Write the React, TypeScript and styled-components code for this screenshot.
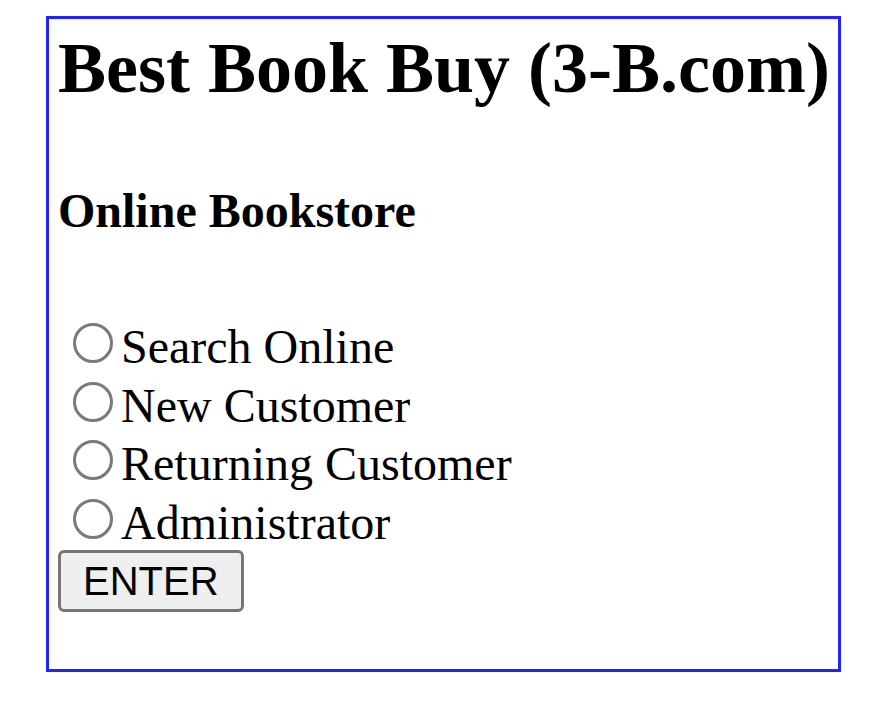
import React from "react";
import styled, { createGlobalStyle } from "styled-components";

const GlobalStyle = createGlobalStyle`
	body {
		margin: 0;
		background: #ffffff;
		font-family: "Liberation Serif", "Times New Roman", serif;
		color: #000000;
	}
`;

const Page = styled.div`
	padding: 16px 0 0 46px;
`;

const Frame = styled.div`
	width: 795px;
	height: 656px;
	box-sizing: border-box;
	border: 3px solid #2222ff;
	padding: 9px;
	display: flex;
	flex-direction: column;
	align-items: flex-start;
`;

const Title = styled.h1`
	margin: 0;
	font-size: 72px;
	line-height: 80px;
	font-weight: bold;
	white-space: nowrap;
`;

const Subtitle = styled.h2`
	margin: 76px 0 0;
	font-size: 48px;
	line-height: 53px;
	font-weight: bold;
`;

const Choices = styled.div`
	margin-top: 81px;
	margin-bottom: -2px;
	display: flex;
	flex-direction: column;
`;

const Choice = styled.label`
	display: block;
	font-size: 48px;
	line-height: 58.5px;
	white-space: nowrap;
`;

const Radio = styled.input.attrs({ type: "radio", name: "role" })`
	appearance: none;
	display: inline-block;
	box-sizing: border-box;
	width: 40px;
	height: 40px;
	margin: 0 8px 0 15px;
	border: 3px solid #7a7a7a;
	border-radius: 50%;
	background: #ffffff;
	vertical-align: baseline;
`;

const EnterButton = styled.button`
	height: 62px;
	box-sizing: border-box;
	padding: 0 22px;
	border: 3px solid #767676;
	border-radius: 6px;
	background: #efefef;
	font-family: "Liberation Sans", Arial, sans-serif;
	font-size: 40px;
	color: #000000;
`;

const roles = ["Search Online", "New Customer", "Returning Customer", "Administrator"];

const App = () => {
	return (
		<>
			<GlobalStyle />
			<Page>
				<Frame>
					<Title>Best Book Buy (3-B.com)</Title>
					<Subtitle>Online Bookstore</Subtitle>
					<Choices>
						{roles.map((role) => (
							<Choice key={role}>
								<Radio value={role} />
								{role}
							</Choice>
						))}
					</Choices>
					<EnterButton>ENTER</EnterButton>
				</Frame>
			</Page>
		</>
	);
};

export default App;
